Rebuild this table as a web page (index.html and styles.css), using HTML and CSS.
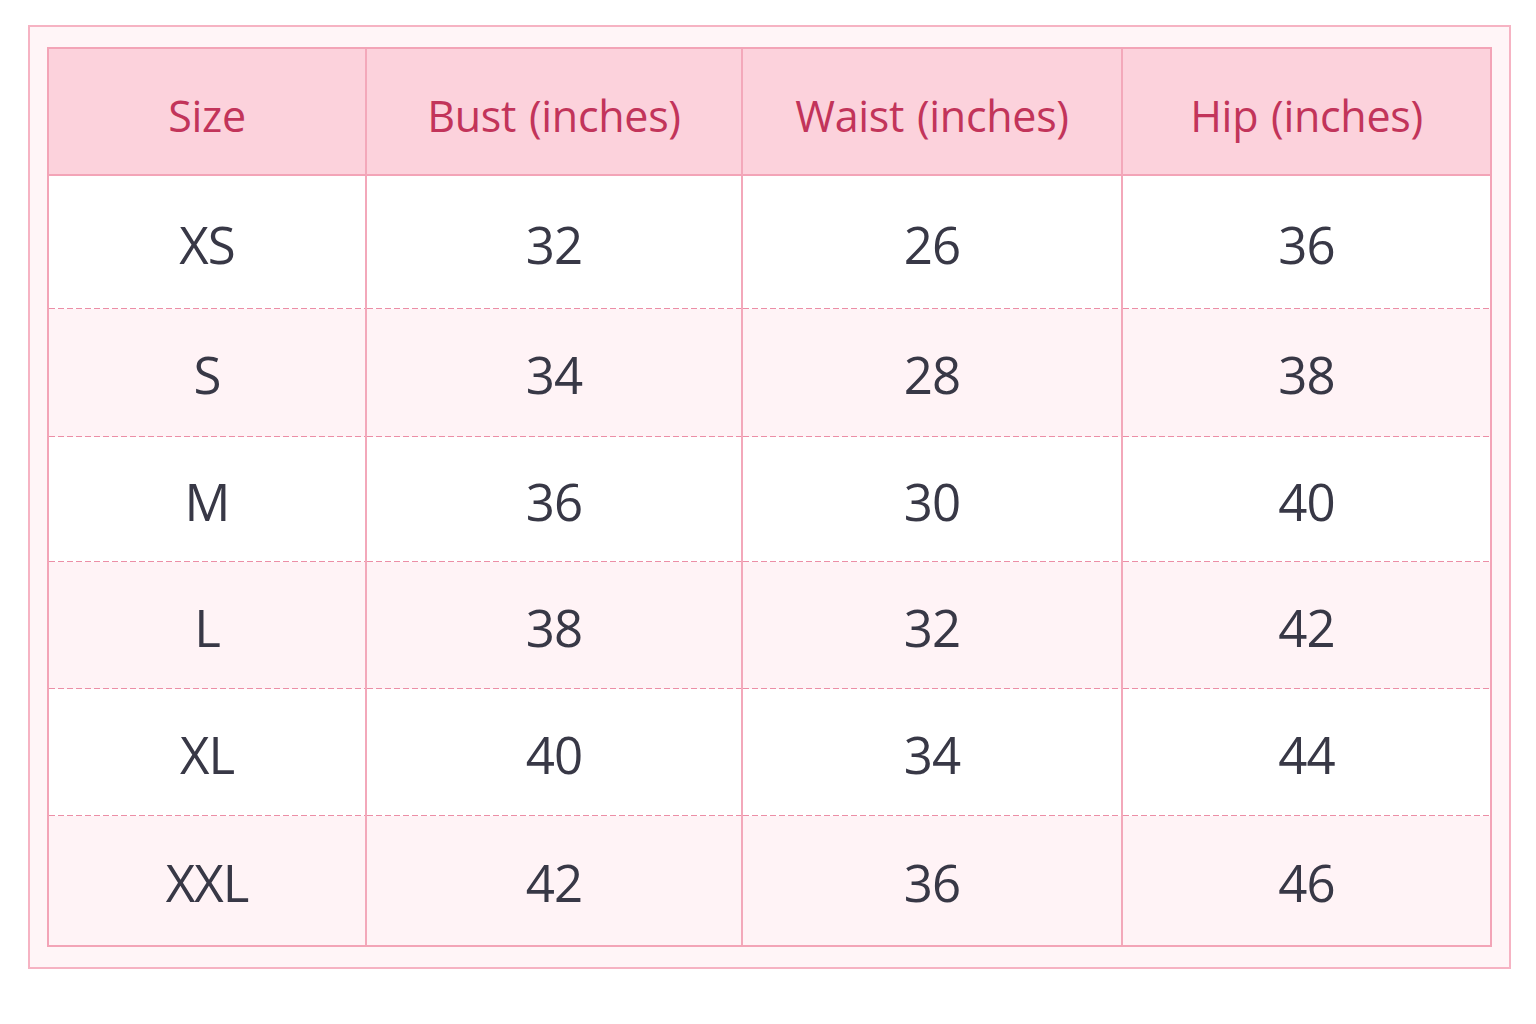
FILE: index.html
```html
<!DOCTYPE html>
<html lang="en">
<head>
<meta charset="utf-8">
<title>Size Chart</title>
<link rel="stylesheet" href="styles.css">
</head>
<body>
<div class="frame">
  <div class="chart">
    <div class="cell head">Size</div>
    <div class="cell head">Bust (inches)</div>
    <div class="cell head">Waist (inches)</div>
    <div class="cell head">Hip (inches)</div>

    <div class="cell">XS</div><div class="cell">32</div><div class="cell">26</div><div class="cell">36</div>
    <div class="cell alt">S</div><div class="cell alt">34</div><div class="cell alt">28</div><div class="cell alt">38</div>
    <div class="cell">M</div><div class="cell">36</div><div class="cell">30</div><div class="cell">40</div>
    <div class="cell alt">L</div><div class="cell alt">38</div><div class="cell alt">32</div><div class="cell alt">42</div>
    <div class="cell">XL</div><div class="cell">40</div><div class="cell">34</div><div class="cell">44</div>
    <div class="cell alt last">XXL</div><div class="cell alt last">42</div><div class="cell alt last">36</div><div class="cell alt last">46</div>
  </div>
</div>
</body>
</html>
```

FILE: styles.css
```css
* { box-sizing: border-box; }
html, body { margin: 0; padding: 0; background: #ffffff; }
body {
  font-family: "Open Sans", "Noto Sans", sans-serif;
  padding: 25px 0 0 28px;
}
.frame {
  width: 1483px;
  height: 944px;
  border: 2px solid #f6b3c3;
  background: #fff5f7;
  padding: 20px 17px 18px 17px;
}
.chart {
  display: grid;
  grid-template-columns: 318px 376px 380px 1fr;
  grid-template-rows: 127px 133px 128px 125px 127px 127px 129px;
  border: 2px solid #f3a4b7;
  background: #ffffff;
}
.cell {
  display: flex;
  align-items: center;
  justify-content: center;
  border-right: 2px solid #f3a8ba;
  color: #383846;
  font-size: 51px;
  letter-spacing: -1px;
  padding-top: 2px;
  background-color: #ffffff;
  background-image: repeating-linear-gradient(to right, #ec8ea6 0 6px, transparent 6px 9px);
  background-size: 100% 1px;
  background-position: left bottom;
  background-repeat: no-repeat;
}
.cell:nth-child(4n) { border-right: none; }
.head {
  background: #fcd2dc;
  color: #c2345a;
  font-size: 43px;
  letter-spacing: -0.3px;
  word-spacing: 2px;
  border-bottom: 2px solid #f3a4b7;
  padding-top: 7px;
}
.alt { background-color: #fff3f6; }
.last { background-image: none; }
```
